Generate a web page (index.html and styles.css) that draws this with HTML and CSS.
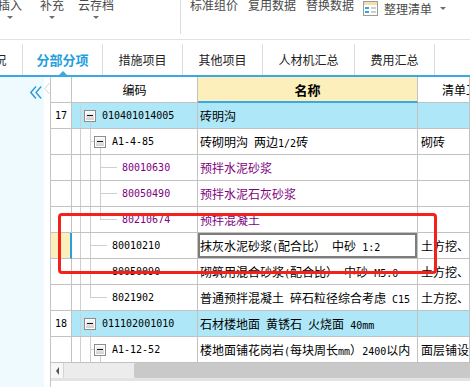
FILE: index.html
```html
<!DOCTYPE html>
<html lang="zh-CN">
<head>
    <meta charset="UTF-8">
    <meta name="viewport" content="width=device-width, initial-scale=1.0">
    <title>分部分项</title>
    <link rel="stylesheet" href="styles.css">
</head>
<body>
    <div class="toolbar">
        <div class="tb-item tb-insert"><span>插入</span><i class="caret"></i></div>
        <div class="tb-item tb-add"><span>补充</span><i class="caret"></i></div>
        <div class="tb-item tb-cloud"><span>云存档</span><i class="caret"></i></div>
        <div class="tb-sep"></div>
        <div class="tb-links">
            <span>标准组价</span>
            <span>复用数据</span>
            <span>替换数据</span>
        </div>
        <div class="tb-menu">
            <svg width="15" height="15" viewBox="0 0 15 15">
                <rect x="0.5" y="0.5" width="14" height="14" fill="#fff" stroke="#9c9c9c"/>
                <rect x="1" y="1" width="13" height="3" fill="#f2e0ae"/>
                <rect x="2" y="6" width="4" height="2" fill="#3aa3e3"/>
                <rect x="2" y="10" width="4" height="2" fill="#3aa3e3"/>
                <rect x="8" y="6" width="5" height="2" fill="#cfcfcf"/>
                <rect x="8" y="10" width="5" height="2" fill="#cfcfcf"/>
            </svg>
            <span>整理清单</span>
            <i class="caret"></i>
        </div>
    </div>

    <div class="tabs">
        <div class="tab">工程概况</div>
        <div class="tab on">分部分项</div>
        <div class="tab">措施项目</div>
        <div class="tab">其他项目</div>
        <div class="tab wide">人材机汇总</div>
        <div class="tab">费用汇总</div>
    </div>

    <div class="main">
        <aside class="side">
            <svg class="collapse" width="12" height="13" viewBox="0 0 12 13">
                <path d="M6 .5 .8 6.5 6 12.5M11.2 .5 6 6.5 11.2 12.5" fill="none" stroke="#2b9cd6" stroke-width="1.4"/>
            </svg>
        </aside>
        <div class="notch">
            <svg width="6" height="11" viewBox="0 0 6 11"><path d="M5.5 0 .5 5.5 5.5 11" fill="#fff" stroke="#d2d2d2"/></svg>
        </div>

        <div class="sheet">
            <div class="grid">
                <div class="c rn"></div>
                <div class="c hd">编码</div>
                <div class="c hd nm-hd">名称</div>
                <div class="c qd-hd">清单工作内容</div>

                <div class="c rn">17</div>
                <div class="c code lv0 hl"><i class="tog"></i>010401014005</div>
                <div class="c nm hl">砖明沟</div>
                <div class="c qd hl"></div>

                <div class="c rn"></div>
                <div class="c code br1"><i class="tog"></i>A1-4-85</div>
                <div class="c nm">砖砌明沟<span class="n"> </span>两边<span class="n">1/2</span>砖</div>
                <div class="c qd">砌砖</div>

                <div class="c rn"></div>
                <div class="c code lf2 pp">80010630</div>
                <div class="c nm pp">预拌水泥砂浆</div>
                <div class="c qd"></div>

                <div class="c rn"></div>
                <div class="c code lf2 pp">80050490</div>
                <div class="c nm pp">预拌水泥石灰砂浆</div>
                <div class="c qd"></div>

                <div class="c rn"></div>
                <div class="c code lf2e pp">80210674</div>
                <div class="c nm pp">预拌混凝土</div>
                <div class="c qd"></div>

                <div class="c rn cur"></div>
                <div class="c code lf1">80010210</div>
                <div class="c nm sel">抹灰水泥砂浆<span class="n">(</span>配合比）<span class="n"> </span>中砂<span class="n"> 1:2</span></div>
                <div class="c qd">土方挖、运输</div>

                <div class="c rn"></div>
                <div class="c code lf1">80050090</div>
                <div class="c nm">砌筑用混合砂浆<span class="n">(</span>配合比）<span class="n"> </span>中砂<span class="n"> M5.0</span></div>
                <div class="c qd">土方挖、运输</div>

                <div class="c rn"></div>
                <div class="c code lf1e">8021902</div>
                <div class="c nm">普通预拌混凝土<span class="n"> </span>碎石粒径综合考虑<span class="n"> C15</span></div>
                <div class="c qd">土方挖、运输</div>

                <div class="c rn">18</div>
                <div class="c code lv0 hl"><i class="tog"></i>011102001010</div>
                <div class="c nm hl">石材楼地面<span class="n"> </span>黄锈石<span class="n"> </span>火烧面<span class="n"> 40mm</span></div>
                <div class="c qd hl"></div>

                <div class="c rn"></div>
                <div class="c code br1"><i class="tog"></i>A1-12-52</div>
                <div class="c nm">楼地面铺花岗岩<span class="n">(</span>每块周长<span class="n">mm</span>）<span class="n">2400</span>以内</div>
                <div class="c qd">面层铺设</div>
            </div>

            <div class="hscroll">
                <div class="sb-btn"><i class="sb-arrow"></i></div>
                <div class="sb-track"></div>
                <div class="sb-thumb"></div>
            </div>
            <div class="sb-under"></div>
        </div>

        <div class="mark"></div>
    </div>
</body>
</html>
```

FILE: styles.css
```css
body {
    margin: 0;
    width: 470px;
    height: 387px;
    overflow: hidden;
    background-color: #fff;
    font-family: "Noto Sans CJK SC", sans-serif;
    font-size: 12px;
    color: #000;
}

/* toolbar */
.toolbar {
    display: flex;
    height: 39px;
    border-bottom: 1px solid #e2e2e2;
    color: #4a4a4a;
}

.tb-item {
    display: flex;
    flex-direction: column;
    align-items: center;
    margin-top: -3px;
    flex: none;
}

.tb-item span,
.tb-links span {
    line-height: 16px;
    white-space: nowrap;
}

.tb-insert { width: 24px; margin-left: -2px; }
.tb-add { width: 24px; margin-left: 18px; }
.tb-cloud { width: 36px; margin-left: 14px; }

.caret {
    width: 0;
    height: 0;
    border-left: 3px solid transparent;
    border-right: 3px solid transparent;
    border-top: 3px solid #6e6e6e;
    margin-top: 3px;
}

.tb-sep {
    width: 1px;
    height: 34px;
    background-color: #dcdcdc;
    margin-left: 66px;
    flex: none;
}

.tb-links {
    display: flex;
    gap: 10px;
    margin-left: 9px;
    margin-top: -3px;
}

.tb-menu {
    display: flex;
    align-items: center;
    gap: 6px;
    height: 17px;
    margin-left: 9px;
    white-space: nowrap;
}

.tb-menu .caret {
    margin: 0 0 0 2px;
}

/* tabs */
.tabs {
    display: flex;
    height: 35px;
    margin-left: -57px;
    border-bottom: 2px solid #39a9df;
}

.tab {
    box-sizing: border-box;
    flex: none;
    width: 80px;
    height: 31px;
    margin-top: 4px;
    border-right: 1px solid #dcdcdc;
    text-align: center;
    line-height: 31px;
    color: #222;
    position: relative;
}

.tab.wide { width: 92px; }

.tab.on {
    color: #1f9fe0;
    font-weight: bold;
    font-size: 13px;
}

.tab.on::after {
    content: '';
    position: absolute;
    left: 50%;
    bottom: 0;
    margin-left: -4px;
    border: 4px solid transparent;
    border-top: 0;
    border-bottom-color: #39a9df;
}

/* main area */
.main {
    display: flex;
    height: 310px;
    position: relative;
}

.side {
    flex: none;
    width: 44px;
    background-color: #eefafe;
}

.collapse {
    display: block;
    margin: 9px 0 0 30px;
}

.notch {
    flex: none;
    width: 6px;
}

.notch svg {
    display: block;
    margin-top: 6px;
}

.sheet {
    flex: 1;
    min-width: 0;
    border-left: 1px solid #c4c4c4;
    display: flex;
    flex-direction: column;
}

.grid {
    display: grid;
    grid-template-columns: 21px 126px 220px 1fr;
    grid-auto-rows: 26px;
}

.c {
    box-sizing: border-box;
    white-space: nowrap;
    overflow: hidden;
    line-height: 25px;
    border-right: 1px solid #c2c2c2;
    border-bottom: 1px solid #c2c2c2;
}

.rn {
    text-align: center;
    font-family: "DejaVu Sans Mono", monospace;
    font-size: 10px;
}

.rn.cur {
    background-color: #fdefbb;
    border-right: 2px solid #2d9fd8;
}

.hd {
    text-align: center;
}

.nm-hd {
    background-color: #fdefbb;
    border-bottom: 2px solid #39a9df;
    font-weight: bold;
    font-size: 13px;
}

.qd-hd {
    padding-left: 24px;
}

.hl { background-color: #aee8f8; }
.pp { color: #800080; }

.nm { padding-left: 2px; }
.qd { padding-left: 3px; }

.nm.sel {
    box-shadow: inset 0 0 0 2px #7d7d7d;
}

.n {
    font-family: "DejaVu Sans Mono", monospace;
    font-size: 10px;
}

/* code column with tree guides */
.code {
    --g: linear-gradient(#cfcfcf, #cfcfcf);
    display: flex;
    align-items: center;
    font-family: "DejaVu Sans Mono", monospace;
    font-size: 10px;
    background-repeat: no-repeat;
}

.lv0 {
    padding-left: 12px;
    background-image: var(--g), var(--g);
    background-position: 8px 0, 18px 100%;
    background-size: 1px 100%, 1px 50%;
}

.br1 {
    padding-left: 22px;
    background-image: var(--g), var(--g), var(--g), var(--g);
    background-position: 8px 0, 18px 0, 18px 50%, 28px 100%;
    background-size: 1px 100%, 1px 100%, 4px 1px, 1px 50%;
}

.lf1 {
    padding-left: 40px;
    background-image: var(--g), var(--g), var(--g);
    background-position: 8px 0, 18px 0, 18px 50%;
    background-size: 1px 100%, 1px 100%, 17px 1px;
}

.lf1e {
    padding-left: 40px;
    background-image: var(--g), var(--g), var(--g);
    background-position: 8px 0, 18px 0, 18px 50%;
    background-size: 1px 100%, 1px 50%, 17px 1px;
}

.lf2 {
    padding-left: 50px;
    background-image: var(--g), var(--g), var(--g), var(--g);
    background-position: 8px 0, 18px 0, 28px 0, 28px 50%;
    background-size: 1px 100%, 1px 100%, 1px 100%, 17px 1px;
}

.lf2e {
    padding-left: 50px;
    background-image: var(--g), var(--g), var(--g), var(--g);
    background-position: 8px 0, 18px 0, 28px 0, 28px 50%;
    background-size: 1px 100%, 1px 100%, 1px 50%, 17px 1px;
}

.tog {
    box-sizing: border-box;
    flex: none;
    width: 12px;
    height: 12px;
    margin-right: 6px;
    border: 1px solid #8c8c8c;
    box-shadow: inset 0 0 0 1px #fff;
    background: linear-gradient(#fdfdfd, #cdcdcd);
    display: flex;
    align-items: center;
    justify-content: center;
}

.tog::after {
    content: '';
    width: 6px;
    height: 1px;
    background-color: #111;
}

/* horizontal scrollbar */
.hscroll {
    display: flex;
    height: 15px;
    background-color: #ececec;
}

.sb-btn {
    box-sizing: border-box;
    width: 13px;
    background-color: #f7f7f7;
    border-right: 1px solid #d4d4d4;
    display: flex;
    align-items: center;
    justify-content: center;
}

.sb-arrow {
    width: 0;
    height: 0;
    border-top: 4px solid transparent;
    border-bottom: 4px solid transparent;
    border-right: 3px solid #555;
}

.sb-track {
    width: 70px;
}

.sb-thumb {
    flex: 1;
    background-color: #c9c9c9;
    border-radius: 2px 0 0 2px;
}

.sb-under {
    height: 3px;
    background-color: #e3e3e3;
}

/* red annotation frame */
.mark {
    position: absolute;
    left: 58px;
    top: 136px;
    width: 379px;
    height: 61px;
    box-sizing: border-box;
    border: 3px solid #f2221b;
    border-radius: 4px;
}
```
